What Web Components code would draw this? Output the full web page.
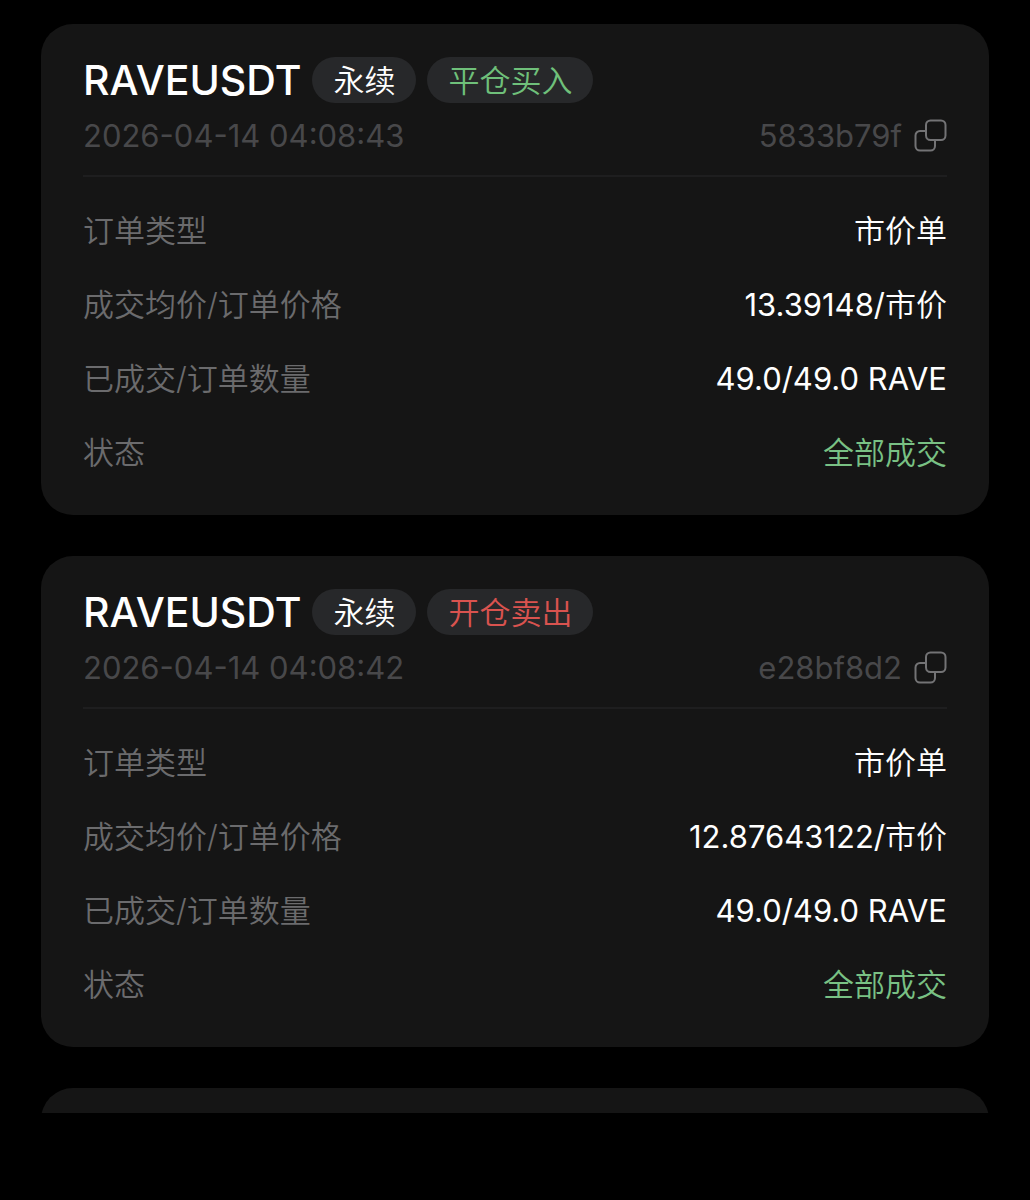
<!DOCTYPE html>
<html lang="zh-CN">
<head>
<meta charset="UTF-8">
<meta name="viewport" content="width=device-width, initial-scale=1">
<title>订单历史</title>
<style>
  body {
    margin: 0;
    background: #000;
    color: #fff;
    font-family: Inter, "Noto Sans CJK SC DemiLight", "Noto Sans CJK SC", sans-serif;
    font-size: 31px;
    line-height: 42px;
  }
</style>
</head>
<body>
<order-list>
  <order-card symbol="RAVEUSDT" time="2026-04-14 04:08:43" order-id="5833b79f">
    <order-tag slot="tags">永续</order-tag>
    <order-tag slot="tags" type="buy">平仓买入</order-tag>
    <order-field label="订单类型">市价单</order-field>
    <order-field label="成交均价/订单价格">13.39148/市价</order-field>
    <order-field label="已成交/订单数量">49.0/49.0 RAVE</order-field>
    <order-field label="状态" type="done">全部成交</order-field>
  </order-card>
  <order-card symbol="RAVEUSDT" time="2026-04-14 04:08:42" order-id="e28bf8d2">
    <order-tag slot="tags">永续</order-tag>
    <order-tag slot="tags" type="sell">开仓卖出</order-tag>
    <order-field label="订单类型">市价单</order-field>
    <order-field label="成交均价/订单价格">12.87643122/市价</order-field>
    <order-field label="已成交/订单数量">49.0/49.0 RAVE</order-field>
    <order-field label="状态" type="done">全部成交</order-field>
  </order-card>
  <!-- 下一张卡片，内容尚未加载 -->
  <order-card></order-card>
</order-list>

<script>
// 列表：底部留出安全区，超出部分裁掉
class OrderList extends HTMLElement {
  constructor() {
    super();
    this.attachShadow({ mode: 'open' });
    this.shadowRoot.innerHTML = `
      <style>
        :host {
          display: block;
          box-sizing: border-box;
          height: 100vh;
          padding-bottom: 87px;
        }
        main {
          display: flex;
          flex-direction: column;
          gap: 41px;
          box-sizing: border-box;
          height: 100%;
          padding: 24px 41px 0;
          overflow: hidden;
        }
        ::slotted(*) {
          flex: none;
        }
      </style>
      <main><slot></slot></main>
    `;
  }
}

// 标题旁的标签：永续 / 买入 / 卖出
class OrderTag extends HTMLElement {
  constructor() {
    super();
    this.attachShadow({ mode: 'open' });
    this.shadowRoot.innerHTML = `
      <style>
        :host {
          display: block;
          padding: 1px 21px 0;
          border-radius: 23px;
          background: #27282a;
          font-weight: 350;
          line-height: 45px;
          white-space: nowrap;
        }
        :host([type="buy"]) {
          color: #6fc07a;
        }
        :host([type="sell"]) {
          color: #d9534f;
        }
      </style>
      <slot></slot>
    `;
  }
}

// 一行：左边名称，右边数值
class OrderField extends HTMLElement {
  connectedCallback() {
    if (this.shadowRoot) return;
    this.attachShadow({ mode: 'open' });
    this.shadowRoot.innerHTML = `
      <style>
        :host {
          display: flex;
          justify-content: space-between;
          gap: 20px;
        }
        .label {
          color: #6b6b6d;
          font-weight: 350;
        }
        .value {
          text-align: right;
        }
        :host([type="done"]) .value {
          color: #79c184;
          font-weight: 350;
        }
      </style>
      <span class="label">${this.getAttribute('label')}</span>
      <span class="value"><slot></slot></span>
    `;
  }
}

class CopyButton extends HTMLElement {
  connectedCallback() {
    if (this.shadowRoot) return;
    this.attachShadow({ mode: 'open' });
    this.shadowRoot.innerHTML = `
      <style>
        :host {
          display: block;
        }
        button {
          display: block;
          padding: 0;
          border: none;
          background: none;
          color: #737375;
          cursor: pointer;
        }
        svg {
          display: block;
        }
      </style>
      <button type="button" aria-label="复制订单号">
        <svg width="34" height="34" viewBox="0 0 34 34" fill="none" stroke="currentColor" stroke-width="2">
          <rect x="13" y="1.500" width="19.500" height="19.500" rx="4.500"/>
          <path d="M13 12H7a4.500 4.500 0 0 0-4.500 4.500V27a4.500 4.500 0 0 0 4.500 4.500h10.500a4.500 4.500 0 0 0 4.500-4.500V21"/>
        </svg>
      </button>
    `;
    this.shadowRoot.querySelector('button').addEventListener('click', () => {
      if (navigator.clipboard) {
        navigator.clipboard.writeText(this.getAttribute('value'));
      }
    });
  }
}

class OrderCard extends HTMLElement {
  connectedCallback() {
    if (this.shadowRoot) return;
    this.attachShadow({ mode: 'open' });
    this.render();
  }

  render() {
    const symbol = this.getAttribute('symbol');
    const orderId = this.getAttribute('order-id');
    this.shadowRoot.innerHTML = `
      <style>
        :host {
          display: block;
          box-sizing: border-box;
          min-height: 120px;
          padding: 33px 42px 41px;
          border-radius: 32px;
          background: #151515;
        }
        .title {
          display: flex;
          align-items: center;
          gap: 11px;
        }
        h2 {
          margin: 0;
          font-size: 41px;
          font-weight: 500;
          line-height: 46px;
        }
        .meta {
          display: flex;
          justify-content: space-between;
          align-items: center;
          margin-top: 14px;
          padding-bottom: 20px;
          border-bottom: 2px solid #1e1e1f;
          color: #48484a;
          line-height: 38px;
        }
        .id {
          display: flex;
          align-items: center;
          gap: 11px;
        }
        .fields {
          display: flex;
          flex-direction: column;
          gap: 32px;
          margin-top: 33px;
        }
      </style>
      ${symbol ? `
      <div class="title">
        <h2>${symbol}</h2>
        <slot name="tags"></slot>
      </div>
      <div class="meta">
        <time>${this.getAttribute('time')}</time>
        <span class="id">
          <span>${orderId}</span>
          <copy-button value="${orderId}"></copy-button>
        </span>
      </div>
      <div class="fields"><slot></slot></div>` : ''}
    `;
  }
}

customElements.define('order-list', OrderList);
customElements.define('order-tag', OrderTag);
customElements.define('order-field', OrderField);
customElements.define('copy-button', CopyButton);
customElements.define('order-card', OrderCard);
</script>
</body>
</html>
